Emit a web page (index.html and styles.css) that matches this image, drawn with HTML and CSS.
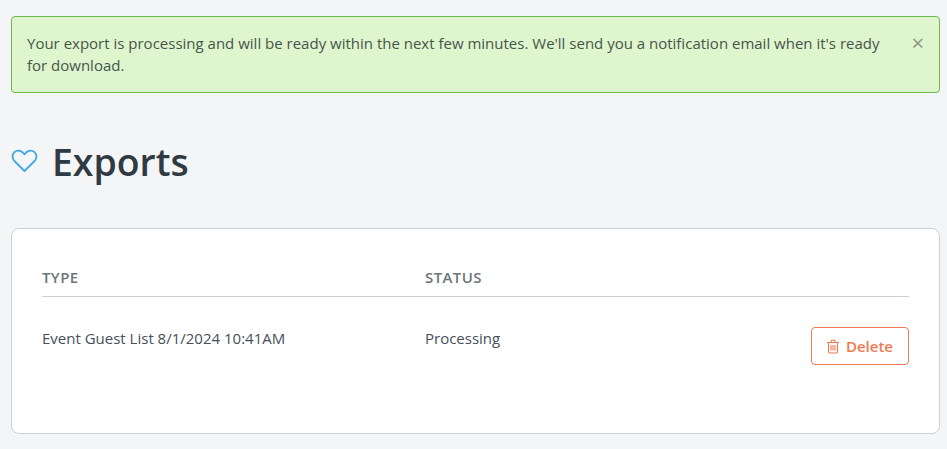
FILE: index.html
```html
<!DOCTYPE html>
<html lang="en">
<head>
    <meta charset="UTF-8">
    <meta name="viewport" content="width=device-width, initial-scale=1.0">
    <title>Exports</title>
    <link rel="stylesheet" href="styles.css">
</head>
<body>
    <div class="alert">
        <p>Your export is processing and will be ready within the next few minutes. We'll send you a notification email when it's ready for download.</p>
        <span class="alert-close">×</span>
    </div>

    <div class="page-title">
        <svg class="heart-icon" width="28" height="26" viewBox="0 0 28 26" fill="none" stroke="#3fa9e0" stroke-width="1.800" stroke-linejoin="round">
            <path d="M13.500 22 3.400 12C.9 9.500.9 5.600 3.200 3.300 5.700 1 9.400 1.100 11.800 3.500L13.500 5.300l1.700-1.800C17.600 1.100 21.300 1 23.800 3.300 26.100 5.600 26.100 9.500 23.600 12Z"/>
        </svg>
        <h1>Exports</h1>
    </div>

    <div class="card">
        <div class="row row-head">
            <div class="col-type">TYPE</div>
            <div class="col-status">STATUS</div>
        </div>
        <div class="row row-body">
            <div class="col-type">Event Guest List 8/1/2024 10:41AM</div>
            <div class="col-status">Processing</div>
            <button class="delete-button">
                <svg width="14" height="15" viewBox="0 0 14 15" fill="none" stroke="#ee7b52" stroke-width="1.100">
                    <path d="M1 3.500h12M4.500 3.500l1-2.300h3l1 2.300M2.500 3.500v9.300q0 1.200 1.200 1.200h6.600q1.200 0 1.200-1.200V3.500M5 6v5.500M7 6v5.500M9 6v5.500"/>
                </svg>
                Delete
            </button>
        </div>
    </div>
</body>
</html>
```

FILE: styles.css
```css
body {
    font-family: 'Open Sans', sans-serif;
    background-color: #f4f5f7;
    color: #333c44;
    margin: 0;
    padding: 16px 7px 0 11px;
}
.alert {
    display: flex;
    justify-content: space-between;
    align-items: flex-start;
    height: 77px;
    box-sizing: border-box;
    padding: 15px 15px 0 15px;
    background-color: #dff5cd;
    border: 1px solid #6cbb4a;
    border-radius: 4px;
    color: #46554c;
    font-size: 15px;
    line-height: 22px;
}
.alert p {
    margin: 0;
    width: 862px;
}
.alert-close {
    color: #8a9688;
    font-size: 22px;
    line-height: 20px;
}
.page-title {
    display: flex;
    align-items: center;
    margin-top: 44px;
    height: 50px;
}
.heart-icon {
    margin-right: 14px;
}
h1 {
    margin: 0 0 2px -1px;
    font-size: 37.4px;
    font-weight: 600;
    color: #2f3a42;
}
.card {
    margin-top: 41px;
    height: 206px;
    box-sizing: border-box;
    padding: 0 30px;
    background-color: white;
    border: 1px solid #ccd0d4;
    border-radius: 8px;
}
.row {
    display: flex;
}
.col-type {
    width: 383px;
}
.col-status {
    flex: 1;
}
.row-head {
    height: 68px;
    box-sizing: border-box;
    padding-top: 38px;
    border-bottom: 1px solid #ccd0d4;
    font-size: 15px;
    line-height: 20px;
    font-weight: 600;
    letter-spacing: 0.4px;
    color: #6c757b;
}
.row-body {
    align-items: flex-start;
    padding-top: 30px;
    font-size: 15px;
    line-height: 22px;
    color: #46505a;
}
.delete-button {
    display: flex;
    align-items: center;
    justify-content: center;
    gap: 6px;
    width: 98px;
    height: 38px;
    box-sizing: border-box;
    padding-right: 7px;
    background-color: white;
    border: 1px solid #ee7b52;
    border-radius: 4px;
    color: #ee7b52;
    font-family: inherit;
    font-size: 15px;
    font-weight: 600;
}
```
